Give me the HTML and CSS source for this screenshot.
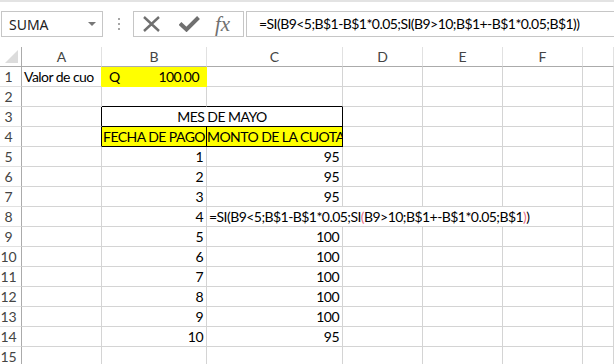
FILE: index.html
```html
<!DOCTYPE html>
<html lang="es">
<head>
    <meta charset="UTF-8">
    <title>MES DE MAYO</title>
    <link rel="stylesheet" href="styles.css">
</head>
<body>
    <div class="formula-bar">
        <div class="name-box">
            <span>SUMA</span>
            <svg class="drop" width="8" height="4" viewBox="0 0 8 4"><path d="M0 0H8L4 4Z" fill="#777"/></svg>
        </div>
        <div class="grip">
            <svg width="3" height="12" viewBox="0 0 3 12" fill="#a6a6a6">
                <rect x="0" y="0" width="2" height="2"/>
                <rect x="0" y="5" width="2" height="2"/>
                <rect x="0" y="10" width="2" height="2"/>
            </svg>
        </div>
        <div class="fx-buttons">
            <svg class="btn-cancel" width="17" height="16" viewBox="0 0 17 16">
                <path d="M1 1L16 15M16 1L1 15" stroke="#707070" stroke-width="2.4" fill="none"/>
            </svg>
            <svg class="btn-enter" width="21" height="16" viewBox="0 0 21 16">
                <path d="M1 7.5L7.5 13.5L19.5 1.5" stroke="#707070" stroke-width="4" fill="none"/>
            </svg>
            <span class="btn-fx">fx</span>
        </div>
        <div class="formula-input">=SI(B9&lt;5;B$1-B$1*0.05;SI(B9&gt;10;B$1+-B$1*0.05;B$1))</div>
    </div>

    <div class="sheet">
        <div class="row col-heads">
            <div class="corner"></div>
            <div>A</div><div>B</div><div>C</div><div>D</div><div>E</div><div>F</div><div></div>
        </div>
        <div class="row">
            <div class="rh">1</div>
            <div class="txt next-fill">Valor de cuo</div>
            <div class="fill money"><span>Q</span><span>100.00</span></div>
            <div></div><div></div><div></div><div></div><div></div>
        </div>
        <div class="row">
            <div class="rh">2</div>
            <div></div><div class="b-bottom"></div><div class="b-bottom"></div><div></div><div></div><div></div><div></div>
        </div>
        <div class="row">
            <div class="rh">3</div>
            <div class="b-right"></div>
            <div class="merged boxed">MES DE MAYO</div>
            <div></div><div></div><div></div><div></div>
        </div>
        <div class="row">
            <div class="rh">4</div>
            <div class="b-right"></div>
            <div class="head-cell boxed">FECHA DE PAGO</div>
            <div class="head-cell boxed">MONTO DE LA CUOTA</div>
            <div></div><div></div><div></div><div></div>
        </div>
        <div class="row">
            <div class="rh">5</div>
            <div></div><div class="num">1</div><div class="num">95</div><div></div><div></div><div></div><div></div>
        </div>
        <div class="row">
            <div class="rh">6</div>
            <div></div><div class="num">2</div><div class="num">95</div><div></div><div></div><div></div><div></div>
        </div>
        <div class="row">
            <div class="rh">7</div>
            <div></div><div class="num">3</div><div class="num">95</div><div></div><div></div><div></div><div></div>
        </div>
        <div class="row">
            <div class="rh">8</div>
            <div></div><div class="num">4</div>
            <div class="editing">=SI(B9&lt;5;B$1-B$1*0.05;SI<span class="paren">(</span>B9&gt;10;B$1+-B$1*0.05;B$1<span class="paren">)</span>)</div>
            <div></div>
        </div>
        <div class="row">
            <div class="rh">9</div>
            <div></div><div class="num">5</div><div class="num">100</div><div></div><div></div><div></div><div></div>
        </div>
        <div class="row">
            <div class="rh">10</div>
            <div></div><div class="num">6</div><div class="num">100</div><div></div><div></div><div></div><div></div>
        </div>
        <div class="row">
            <div class="rh">11</div>
            <div></div><div class="num">7</div><div class="num">100</div><div></div><div></div><div></div><div></div>
        </div>
        <div class="row">
            <div class="rh">12</div>
            <div></div><div class="num">8</div><div class="num">100</div><div></div><div></div><div></div><div></div>
        </div>
        <div class="row">
            <div class="rh">13</div>
            <div></div><div class="num">9</div><div class="num">100</div><div></div><div></div><div></div><div></div>
        </div>
        <div class="row">
            <div class="rh">14</div>
            <div></div><div class="num">10</div><div class="num">95</div><div></div><div></div><div></div><div></div>
        </div>
        <div class="row">
            <div class="rh">15</div>
            <div></div><div></div><div></div><div></div><div></div><div></div><div></div>
        </div>
    </div>
</body>
</html>
```

FILE: styles.css
```css
* {
    box-sizing: border-box;
}

body {
    margin: 0;
    background: #fff;
    font-family: Lato, "Liberation Sans", sans-serif;
    color: #000;
    overflow: hidden;
}

/* barra de formulas */
.formula-bar {
    display: flex;
    align-items: flex-start;
    height: 47px;
    border-top: 2px solid #e3e3e3;
    padding-top: 9px;
}
.name-box {
    display: flex;
    align-items: center;
    justify-content: space-between;
    width: 102px;
    height: 26px;
    margin-left: 1px;
    padding: 0 6px 0 7px;
    border: 1px solid #c6c6c6;
    font-family: "Noto Sans", sans-serif;
    font-size: 14px;
    color: #222;
}
.grip {
    display: flex;
    justify-content: center;
    align-items: center;
    width: 30px;
    height: 26px;
    padding-left: 2px;
}
.fx-buttons {
    display: flex;
    align-items: center;
    width: 111px;
    height: 26px;
    border: 1px solid #c6c6c6;
}
.btn-cancel {
    margin-left: 9px;
}
.btn-enter {
    margin-left: 19px;
}
.btn-fx {
    margin-left: 15px;
    font-family: "Liberation Serif", serif;
    font-style: italic;
    font-size: 21px;
    color: #707070;
    line-height: 24px;
}
.formula-input {
    flex: 1;
    height: 26px;
    margin-left: 2px;
    margin-right: -10px;
    padding-left: 12px;
    border: 1px solid #c6c6c6;
    font-size: 14px;
    letter-spacing: -0.55px;
    line-height: 24px;
    white-space: nowrap;
}

/* hoja */
.row {
    display: grid;
    grid-template-columns: 22px 80px 105px 136px 80px 80px 80px 1fr;
    height: 20px;
    font-size: 14px;
    letter-spacing: -0.55px;
    line-height: 19px;
}
.row > div {
    border-right: 1px solid #d4d4d4;
    border-bottom: 1px solid #d4d4d4;
    white-space: nowrap;
}
.col-heads > div {
    text-align: center;
    font-size: 14px;
    letter-spacing: 0;
    color: #444;
    border-right-color: #e1e1e1;
    border-bottom-color: #ababab;
}
.col-heads > .corner {
    position: relative;
    border-right-color: #ababab;
}
.corner::after {
    content: "";
    position: absolute;
    right: 3px;
    bottom: 3px;
    border-left: 13px solid transparent;
    border-bottom: 13px solid #dcdcdc;
}
.row > .rh {
    padding-right: 4px;
    text-align: center;
    font-size: 14px;
    letter-spacing: 0;
    color: #444;
    border-right-color: #ababab;
    border-bottom-color: #e1e1e1;
}
.txt {
    padding-left: 2px;
    overflow: hidden;
}
.num {
    text-align: right;
    padding-right: 3px;
}
.fill {
    background: #ffff00;
}
.row > .fill,
.row > .next-fill {
    border-right-color: #ffff00;
}
.row > .fill {
    border-bottom-color: #ffff00;
}
.money {
    display: flex;
    justify-content: space-between;
    padding: 0 7px 0 7px;
}
.row > .b-bottom {
    border-bottom-color: #000;
}
.row > .b-right {
    border-right-color: #000;
}
.row > .boxed {
    border-right-color: #000;
    border-bottom-color: #000;
}
.merged {
    grid-column: span 2;
    text-align: center;
}
.head-cell {
    background: #ffff00;
    text-align: center;
    overflow: hidden;
}
.editing {
    grid-column: span 4;
    padding-left: 2px;
}
.paren {
    color: #e8708a;
}
```
